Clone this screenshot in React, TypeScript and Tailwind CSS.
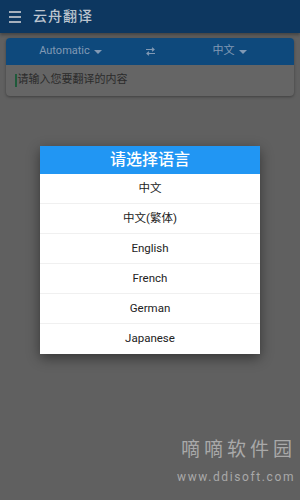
import React from 'react'

const languages = ['中文', '中文(繁体)', 'English', 'French', 'German', 'Japanese']

const font = "font-['Roboto','Noto_Sans_CJK_SC',sans-serif]"

export default function App() {
  return (
    <div className={`relative flex h-[500px] w-[300px] flex-col overflow-hidden bg-[#606060] ${font}`}>
      {/* App bar */}
      <div className="flex h-[33px] items-center bg-[#0d3760] shadow-[0_2px_3px_rgba(0,0,0,0.3)]">
        <div className="ml-[9px] flex w-[12px] flex-col gap-[3px]">
          <div className="h-[2px] bg-[#a6b0bc]" />
          <div className="h-[2px] bg-[#a6b0bc]" />
          <div className="h-[2px] bg-[#a6b0bc]" />
        </div>
        <span className="ml-[12px] text-[14px] font-medium tracking-[1px] text-[#bcc5cf]">云舟翻译</span>
      </div>

      {/* Translate card */}
      <div className="mx-[6px] mt-[5px] overflow-hidden rounded-[4px] bg-[#656565] shadow-[0_1px_3px_rgba(0,0,0,0.35)]">
        <div className="flex h-[27px] items-center bg-[#0e497c] text-[11px] text-[#8199b4]">
          <div className="flex flex-1 items-center justify-center gap-[4px]">
            <span>Automatic</span>
            <span className="h-0 w-0 border-x-[4px] border-t-[4px] border-x-transparent border-t-[#8199b4]" />
          </div>
          <div className="flex w-[30px] justify-center">
            <svg width="11" height="9" viewBox="0 0 11 9" fill="none" stroke="#8199b4" strokeWidth="1.2">
              <path d="M1 2.5h8M7 0.7l2 1.8-2 1.8" />
              <path d="M10 6.5H2M4 4.7L2 6.5l2 1.8" />
            </svg>
          </div>
          <div className="flex flex-1 items-center justify-center gap-[4px]">
            <span>中文</span>
            <span className="h-0 w-0 border-x-[4px] border-t-[4px] border-x-transparent border-t-[#8199b4]" />
          </div>
        </div>
        <div className="flex h-[31px] items-center px-[9px] text-[11px] text-[#2b2b2b]">
          <span className="mr-[1px] h-[13px] w-[1.5px] bg-[#1f5a3a]" />
          <span>请输入您要翻译的内容</span>
        </div>
      </div>

      {/* Dialog */}
      <div className="mx-auto mt-[50px] w-[220px] bg-white shadow-[0_4px_12px_rgba(0,0,0,0.45)]">
        <div className="flex h-[28px] items-center justify-center bg-[#2196f3] text-[16px] font-medium text-white">
          请选择语言
        </div>
        {languages.map((lang, i) => (
          <div
            key={lang}
            className={`flex h-[30px] items-center justify-center text-[11.5px] text-[#222] ${
              i < languages.length - 1 ? 'border-b border-[#f0f0f0]' : ''
            }`}
          >
            {lang}
          </div>
        ))}
      </div>

      {/* Watermark */}
      <div className="absolute top-[438px] right-[4px] flex flex-col items-end gap-[8px] text-[#a9a9a9]">
        <span className="text-[19px] leading-[24px] tracking-[4px]">嘀嘀软件园</span>
        <span className="mr-[1px] text-[12px] leading-[14px] tracking-[1.6px]">www.ddisoft.com</span>
      </div>
    </div>
  )
}
